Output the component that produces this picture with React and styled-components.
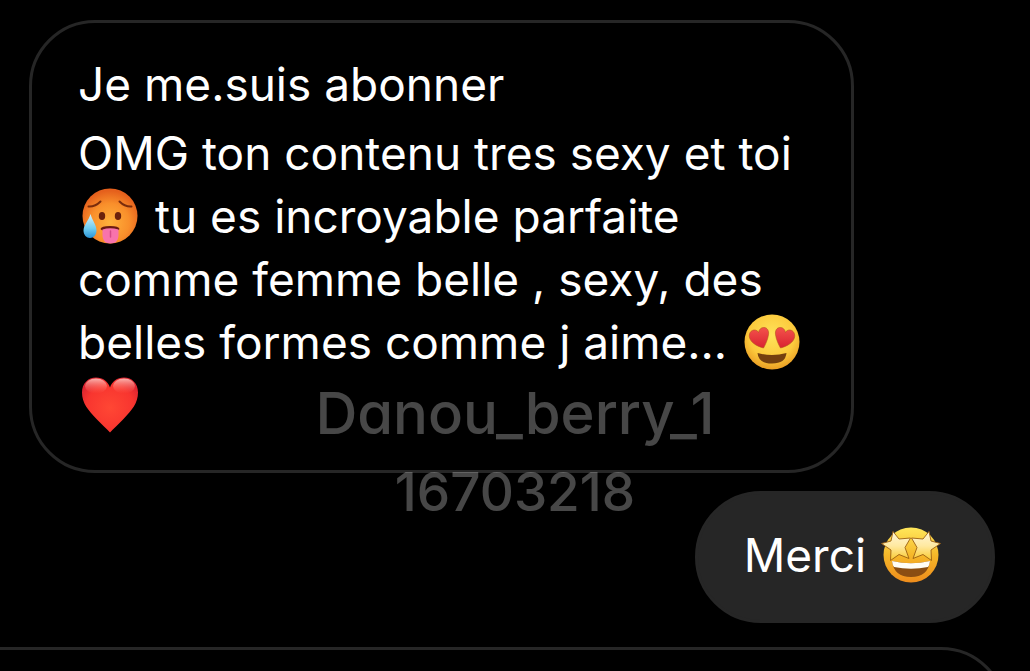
import React from 'react';
import styled, { createGlobalStyle } from 'styled-components';

const HotFace = () => (
	<Emoji viewBox="0 0 60 60" role="img" aria-label="hot face">
		<defs>
			<radialGradient id="hotSkin" cx="50%" cy="62%" r="58%">
				<stop offset="0" stopColor="#ffb13c" />
				<stop offset="0.6" stopColor="#f98f2b" />
				<stop offset="1" stopColor="#e5601c" />
			</radialGradient>
			<linearGradient id="sweat" x1="0" y1="0" x2="0" y2="1">
				<stop offset="0" stopColor="#d9f4fb" />
				<stop offset="0.6" stopColor="#6fcdf0" />
				<stop offset="1" stopColor="#2a94d6" />
			</linearGradient>
		</defs>
		<circle cx="30" cy="30" r="27.5" fill="url(#hotSkin)" />
		<path d="M8.5 20.5Q15 21 20.5 15.500M39.5 15.5Q45 21 51.5 20.5" fill="none" stroke="#7a2c0c" strokeWidth="2" strokeLinecap="round" />
		<ellipse cx="22" cy="30" rx="3.2" ry="4" fill="#6b220c" />
		<ellipse cx="38" cy="30" rx="3.2" ry="4" fill="#6b220c" />
		<path d="M20.5 43Q21 40 30 40T39.5 43Q38.5 45 30 45T20.5 43Z" fill="#6b1a12" />
		<path d="M22.500 43.5Q30 41 38.5 43.5V50Q38 57.5 30.5 57.5T22.5 50Z" fill="#f873ac" />
		<path d="M30.5 45V51" stroke="#d64b88" strokeWidth="1.5" strokeLinecap="round" />
		<path d="M10.5 28C12.5 35 16.5 39 16.5 44.5C16.5 49 13.5 52 10 52S3.5 49 3.5 44.5C3.5 39 8.5 35 10.5 28Z" fill="url(#sweat)" />
	</Emoji>
);

const HeartEyes = () => (
	<Emoji viewBox="0 0 60 60" role="img" aria-label="heart eyes">
		<defs>
			<radialGradient id="loveSkin" cx="50%" cy="38%" r="64%">
				<stop offset="0" stopColor="#ffe35a" />
				<stop offset="0.65" stopColor="#fcca3c" />
				<stop offset="1" stopColor="#e99a22" />
			</radialGradient>
			<linearGradient id="eyeHeart" x1="0" y1="0" x2="0" y2="1">
				<stop offset="0" stopColor="#f4524b" />
				<stop offset="1" stopColor="#d92231" />
			</linearGradient>
		</defs>
		<circle cx="30" cy="30" r="27.5" fill="url(#loveSkin)" />
		<path d="M21.5 36C14 34 8 30 7.300 24.500C7 20.500 9.5 18 12.5 18C14.500 18 15.800 19 16.500 20.500C17 17.500 19 15.500 21.800 15.500C25.500 15.500 27 19 26.500 22.500C25.800 27.500 23.500 32.500 21.5 36Z" fill="url(#eyeHeart)" stroke="#b4521c" strokeWidth="0.6" />
		<path d="M38.5 36C46 34 52 30 52.700 24.500C53 20.500 50.5 18 47.5 18C45.500 18 44.200 19 43.500 20.500C43 17.500 41 15.500 38.200 15.500C34.500 15.500 33 19 33.500 22.500C34.200 27.500 36.500 32.500 38.5 36Z" fill="url(#eyeHeart)" stroke="#b4521c" strokeWidth="0.6" />
		<path d="M15.5 41Q30 45 44.5 41Q43.5 51.5 30 51.5T15.5 41Z" fill="#74400f" />
	</Emoji>
);

const RedHeart = () => (
	<Emoji viewBox="0 0 60 60" role="img" aria-label="red heart">
		<defs>
			<radialGradient id="heartFill" cx="50%" cy="55%" r="60%">
				<stop offset="0" stopColor="#ff4734" />
				<stop offset="0.7" stopColor="#f8352f" />
				<stop offset="1" stopColor="#dc2430" />
			</radialGradient>
			<linearGradient id="heartShine" x1="0" y1="0" x2="0" y2="1">
				<stop offset="0" stopColor="#ffc4bc" stopOpacity="0.9" />
				<stop offset="1" stopColor="#ff6a5c" stopOpacity="0" />
			</linearGradient>
		</defs>
		<path d="M30 57.5C27 54 22 50 17 44.5C8 35 2 28 2 17.5C2 8.5 8 2.5 16 2.5C23 2.5 28 6.5 30 12.5C32 6.5 37 2.5 44 2.5C52 2.5 58 8.5 58 17.5C58 28 52 35 43 44.5C38 50 33 54 30 57.5Z" fill="url(#heartFill)" />
		<ellipse cx="16" cy="11" rx="11" ry="7.5" fill="url(#heartShine)" />
		<ellipse cx="44" cy="11" rx="11" ry="7.5" fill="url(#heartShine)" />
	</Emoji>
);

const StarEyes = () => (
	<Emoji viewBox="0 0 60 60" role="img" aria-label="star struck">
		<defs>
			<linearGradient id="starSkin" x1="0" y1="0" x2="0" y2="1">
				<stop offset="0" stopColor="#ffe75a" />
				<stop offset="0.5" stopColor="#f6b829" />
				<stop offset="1" stopColor="#ee8c1c" />
			</linearGradient>
			<linearGradient id="starFill" x1="0" y1="0" x2="0" y2="1">
				<stop offset="0" stopColor="#fff6d8" />
				<stop offset="0.5" stopColor="#ffe9a0" />
				<stop offset="1" stopColor="#f9c92c" />
			</linearGradient>
		</defs>
		<circle cx="30" cy="30" r="27.5" fill="url(#starSkin)" />
		<g fill="url(#starFill)" stroke="#9b5f12" strokeWidth="0.9" strokeLinejoin="round">
			<path d="M12 6.5L18 14L29.5 13L24 22.5L28 33.500L18 29.500L9.5 35.5L10 25L0.500 18.500L10 16Z" />
			<path d="M48 6.500L42 14L30.5 13L36 22.5L32 33.500L42 29.500L50.500 35.5L50 25L59.500 18.500L50 16Z" />
		</g>
		<path d="M11 36Q30 40.5 49 36Q47 52 30 52T11 36Z" fill="#8a4d12" />
		<path d="M11 36Q30 40.5 49 36Q48.500 40.500 47 42Q30 45.5 13 42Q11.500 40.500 11 36Z" fill="#fffdf6" />
	</Emoji>
);

const App = () => {
	return (
		<Chat>
			<GlobalStyle />
			<Received>
				<Text>Je me.suis abonner</Text>
				<Text>
					OMG ton contenu tres sexy et toi <HotFace /> tu es incroyable parfaite comme femme belle , sexy, des belles formes comme j aime... <HeartEyes />
					<RedHeart />
				</Text>
			</Received>
			<Sent>
				<Text>
					Merci <StarEyes />
				</Text>
			</Sent>
			<NextCard />
			<Watermark>
				<span>Danou_berry_1</span>
				<WatermarkId>16703218</WatermarkId>
			</Watermark>
		</Chat>
	);
};

export default App;

const GlobalStyle = createGlobalStyle`
	body {
		margin: 0;
		background-color: #000;
	}

	* {
		box-sizing: border-box;
	}
`;

const Chat = styled.main`
	position: relative;
	display: flex;
	flex-direction: column;
	align-items: flex-start;
	height: 100vh;
	padding: 20px 35px 0 29px;
	overflow: hidden;
	background-color: #000;
	color: #fff;
	font-family: Inter, "Liberation Sans", sans-serif;
`;

const Bubble = styled.article`
	flex-shrink: 0;
	border: 3px solid #262626;
	border-radius: 66px;
`;

const Received = styled(Bubble)`
	display: flex;
	flex-direction: column;
	gap: 6px;
	width: 85.4%;
	padding: 30px 46px 33px;
`;

const Sent = styled(Bubble)`
	align-self: flex-end;
	margin-top: 18px;
	padding: 30px 49px 33px 46px;
	background-color: #262626;
`;

const NextCard = styled(Bubble)`
	align-self: stretch;
	height: 200px;
	margin: 24px -12px 0 -120px;
`;

const Text = styled.p`
	margin: 0;
	font-size: 46px;
	line-height: 63px;
`;

const Emoji = styled.svg`
	display: inline-block;
	width: 60px;
	height: 60px;
	margin: -6px 2px 0;
	vertical-align: -13px;
`;

const Watermark = styled.p`
	position: absolute;
	top: 374px;
	left: 0;
	display: flex;
	flex-direction: column;
	align-items: center;
	width: 100%;
	margin: 0;
	color: rgba(255, 255, 255, 0.28);
	font-size: 58px;
	font-weight: 500;
	font-feature-settings: "cv11";
	line-height: 79px;
	pointer-events: none;
`;

const WatermarkId = styled.span`
	font-size: 53px;
`;
